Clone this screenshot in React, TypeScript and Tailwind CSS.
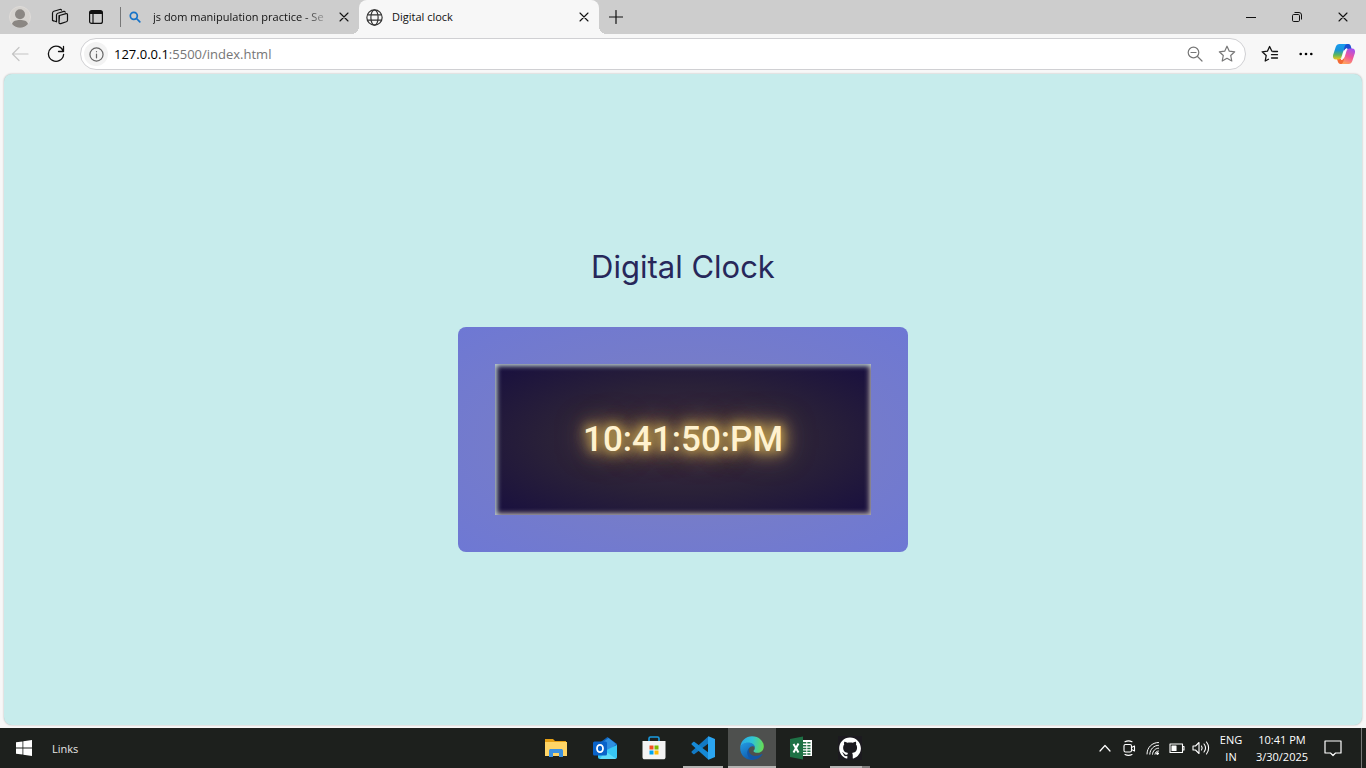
import { useState } from 'react';
import type { ReactNode } from 'react';

function Icon({ children, className = '', box = 20, sw = 1.2 }: { children: ReactNode; className?: string; box?: number; sw?: number }) {
  return (
    <svg viewBox={`0 0 ${box} ${box}`} className={`shrink-0 ${className}`} fill="none" stroke="currentColor" strokeWidth={sw} strokeLinecap="round" strokeLinejoin="round" aria-hidden="true">
      {children}
    </svg>
  );
}

const CloseIcon = () => (
  <Icon box={10} sw={1.1} className="size-[10px]"><path d="M1 1l8 8M9 1l-8 8" /></Icon>
);

function TabBar() {
  return (
    <header className="flex h-[34px] shrink-0 bg-[#cdcdcd] text-[#111]">
      <button aria-label="Profile" className="flex w-10 items-center justify-center">
        <svg viewBox="0 0 22 22" className="size-[22px]" aria-hidden="true">
          <circle cx="11" cy="11" r="10.5" fill="#d6d3cf" stroke="#dedbd8" />
          <circle cx="11" cy="8.2" r="5" fill="#8b8783" />
          <path d="M3 18c1-3.200 4-4 8-4s7 .8 8 4a10.500 10.500 0 0 1-16 0z" fill="#8b8783" />
        </svg>
      </button>
      <button aria-label="Workspaces" className="flex w-10 items-center justify-center">
        <Icon className="size-5" sw={1.2}>
          <path d="M9.500 8.500l6.500-1.800c.8-.2 1.500.2 1.500 1v5.500c0 .8-.4 1.300-1.200 1.600l-5.500 1.800c-1 .3-1.800 0-1.800-1zM6.500 14.800V8c0-1 .5-1.500 1.300-1.800l6-1.800c.6-.1 1.200.2 1.400.7M3.500 14l-1-.5V6.200c0-1 .4-1.600 1.300-1.900l6-1.800c.8-.2 1.400 0 1.700.6M6.500 14.800l-3-1M9 8.500v7.500" />
        </Icon>
      </button>
      <button aria-label="Tab actions" className="flex w-8 items-center justify-center">
        <svg viewBox="0 0 14 14" className="size-[14px]" aria-hidden="true">
          <rect x=".6" y=".6" width="12.800" height="12.800" rx="2" fill="none" stroke="#111" strokeWidth="1.200" />
          <path d="M1 1h12v3H1z" fill="#111" />
          <path d="M4 4v9" stroke="#111" strokeWidth="1.200" />
        </svg>
      </button>
      <nav className="flex" aria-label="Tabs">
        <div className="flex w-[247px] items-center pr-[6px] pl-2">
          <span className="h-5 w-px bg-[#777]" />
          <svg viewBox="0 0 12 12" className="ml-2 size-3 shrink-0" fill="none" stroke="#1673c8" strokeWidth="1.700" strokeLinecap="round" aria-hidden="true">
            <circle cx="4.800" cy="4.800" r="3.500" /><path d="M7.500 7.500l3.300 3.300" />
          </svg>
          <a href="#search" className="ml-3 text-[11px] leading-4 whitespace-nowrap [mask-image:linear-gradient(to_right,black_88%,#0004)]">
            js dom manipulation practice - Se
          </a>
          <button aria-label="Close search tab" className="ml-auto py-1 pr-1"><CloseIcon /></button>
        </div>
        <div className="relative flex w-60 items-center rounded-t-lg bg-[#f7f7f7] pr-[6px] pl-[7px] before:absolute before:bottom-0 before:-left-2 before:size-2 before:bg-[radial-gradient(circle_at_0_0,transparent_8px,#f7f7f7_8px)] after:absolute after:-right-2 after:bottom-0 after:size-2 after:bg-[radial-gradient(circle_at_100%_0,transparent_8px,#f7f7f7_8px)]">
          <Icon className="size-[17px] text-[#333]" box={16} sw={1.1}>
            <circle cx="8" cy="8" r="7.200" /><ellipse cx="8" cy="8" rx="3.400" ry="7.200" /><path d="M1.500 5.500h13M1.500 10.500h13" />
          </Icon>
          <a href="#clock" className="ml-[9px] grow text-[11px] leading-4">Digital clock</a>
          <button aria-label="Close clock tab" className="p-1"><CloseIcon /></button>
        </div>
      </nav>
      <div className="flex grow">
        <button aria-label="New tab" className="flex w-[34px] items-center justify-center">
          <Icon box={14} sw={1.2} className="size-[14px]"><path d="M7 .5v13M.5 7h13" /></Icon>
        </button>
      </div>
      <div className="flex">
        <button aria-label="Minimize" className="flex w-[46px] items-center justify-center">
          <svg viewBox="0 0 10 10" className="size-[10px]" stroke="#111" aria-hidden="true"><path d="M0 5.500h10" /></svg>
        </button>
        <button aria-label="Restore" className="flex w-[46px] items-center justify-center">
          <svg viewBox="0 0 10 10" className="size-[10px]" fill="none" stroke="#111" aria-hidden="true">
            <rect x=".5" y="2.500" width="7" height="7" rx="1.200" /><path d="M2.500.5h4.500a2.500 2.500 0 0 1 2.500 2.500v4.500" />
          </svg>
        </button>
        <button aria-label="Close window" className="flex w-[46px] items-center justify-center"><CloseIcon /></button>
      </div>
    </header>
  );
}

const STAR = 'M10 2.200l2.300 5 5.400.6-4 3.700 1.100 5.500L10 14.300 5.200 17l1.100-5.500-4-3.700 5.400-.6z';

function CopilotLogo() {
  return (
    <svg viewBox="0 0 24 24" className="size-6" aria-hidden="true">
      <defs>
        <linearGradient id="cpA" x1="0" y1="0" x2="0" y2="1"><stop offset="0" stopColor="#1a9cf0" /><stop offset=".4" stopColor="#1894d8" /><stop offset=".7" stopColor="#5cb65c" /><stop offset="1" stopColor="#f0c51c" /></linearGradient>
        <linearGradient id="cpB" x1="0.700" y1="0" x2="0.300" y2="1"><stop offset="0" stopColor="#a551ee" /><stop offset=".5" stopColor="#f0559a" /><stop offset="1" stopColor="#ffa45c" /></linearGradient>
      </defs>
      <path d="M12 2h4.500c1.500 0 2 1 2.400 2.500L19.600 7H15c-1.700 0-2.500 1-3 2.500L10 4z" fill="#1c50d2" />
      <path d="M12 22H8.500C7 22 6.300 21 5.800 19.500L5 17h4c1.700 0 2.500-1 3-2.500L14 20z" fill="#f26a35" />
      <path d="M7.500 2H15c-1.400.3-2 1.500-2.400 2.800L9.500 15c-.5 1.500-1.200 2.500-3 2.500H4C1.500 17.500.5 15.700 1.100 13L3.700 5C4.400 3 5.500 2 7.500 2z" fill="url(#cpA)" />
      <path d="M16.500 22H9c1.400-.3 2-1.500 2.400-2.800L14.500 9c.5-1.500 1.200-2.500 3-2.500H20c2.500 0 3.500 1.800 2.900 4.500L20.300 19c-.7 2-1.800 3-3.800 3z" fill="url(#cpB)" />
      <path d="M13.200 7.600c.5-.5 1-.8 1.800-.9-1 .6-1.300 1.500-1.600 2.500l-2.300 7.600c-.5.500-1 .7-1.900.7 1-.6 1.400-1.500 1.700-2.500z" fill="#fff" stroke="#fff" strokeWidth="1" />
    </svg>
  );
}

function Toolbar() {
  const [url, setUrl] = useState('127.0.0.1:5500/index.html');
  const [host, ...rest] = url.split(':');
  return (
    <div className="flex h-10 shrink-0 items-center bg-[#f7f7f7] pr-[10px] text-[#111]">
      <button aria-label="Back" className="flex w-10 justify-center text-[#c4c4c4]">
        <Icon className="size-[18px]" box={18} sw={1.2}><path d="M1.500 9h15.500M8 2.500L1.500 9 8 15.500" /></Icon>
      </button>
      <button aria-label="Reload" className="flex w-8 justify-center">
        <Icon className="size-[18px]" box={18} sw={1.3}><path d="M16.300 6.500A7.600 7.600 0 1 0 16.600 9.500M16.500 1.500v5h-5" /></Icon>
      </button>
      <div className="ml-2 flex h-8 grow items-center rounded-full border border-[#d0d0d3] bg-white pr-2 pl-[3px]">
        <button aria-label="Site information" className="flex size-6 items-center justify-center rounded-full bg-[#f3f3f3] text-[#666]">
          <Icon className="size-[15px]" box={16} sw={1.3}><circle cx="8" cy="8" r="7" /><path d="M8 7.500v4M8 4.800v.2" /></Icon>
        </button>
        <label className="relative ml-[6px] grow text-[13px] leading-5">
          <span aria-hidden="true" className="text-black">{host}<span className="text-[#767676]">{rest.length ? ':' + rest.join(':') : ''}</span></span>
          <input aria-label="Address" value={url} onChange={(e) => setUrl(e.target.value)} className="absolute inset-0 w-full bg-transparent text-transparent caret-black outline-none" />
        </label>
        <button aria-label="Zoom out" className="flex w-8 justify-center text-[#777]">
          <Icon className="size-4" box={16} sw={1.2}><circle cx="6.500" cy="6.500" r="5.300" /><path d="M10.500 10.500l4.500 4.500M4 6.500h5" /></Icon>
        </button>
        <button aria-label="Add to favorites" className="ml-[6px] flex w-5 justify-center text-[#777]">
          <Icon className="size-5" sw={1.2}><path d={STAR} /></Icon>
        </button>
      </div>
      <button aria-label="Favorites" className="ml-[6px] flex w-9 justify-center">
        <Icon className="size-5" sw={1.3}><path d="M8.500 15.200L5.200 17l1-5.500-4-3.700 5.200-.6L9.600 2.500l2.300 4.700 3.600.4M11.500 10.700h6M11.500 14h6M12.500 7.500h5" /></Icon>
      </button>
      <button aria-label="Settings and more" className="flex w-9 justify-center">
        <svg viewBox="0 0 14 4" className="h-1 w-[14px]" aria-hidden="true"><circle cx="1.700" cy="2" r="1.300" /><circle cx="7" cy="2" r="1.300" /><circle cx="12.300" cy="2" r="1.300" /></svg>
      </button>
      <button aria-label="Copilot" className="ml-2"><CopilotLogo /></button>
    </div>
  );
}

function ClockPage() {
  return (
    <main className="mx-1 mb-[3px] flex grow flex-col items-center justify-center rounded-lg bg-[#c7ecec] pb-1 shadow-[0_0_2px_#aaa]">
      <h1 className="mb-9 font-[Inter,sans-serif] text-[31px] leading-[48px] text-[#27275a]">Digital Clock</h1>
      <section className="rounded-lg bg-[radial-gradient(#7d80bf,#6e78d4)] p-[37px]">
        <div className="flex h-[151px] w-[376px] items-center justify-center bg-[radial-gradient(#3a2c40,#2a2138_50%,#180f3f)] shadow-[inset_2px_2px_5px_#b9cbd0,inset_-2px_-2px_5px_#a59a9a]">
          <time className="font-[Roboto,'Liberation_Sans',sans-serif] text-[35px] leading-[48px] font-medium text-[#fff2cf] [text-shadow:0_0_8px_#b8984f,0_0_14px_#b8984f,0_0_18px_#b8984f,0_0_24px_#a98b4c,0_0_32px_#8a7050]">10:41:50:PM</time>
        </div>
      </section>
    </main>
  );
}

function ExplorerLogo() {
  return (
    <svg viewBox="0 0 24 20" className="h-5 w-6" aria-hidden="true">
      <path d="M1 1h8l2 2h11v5H1z" fill="#e6a014" /><path d="M1 4h22v14H1z" fill="#ffd566" />
      <path d="M5 19v-6c0-1.500.7-2 2-2h10c1.300 0 2 .5 2 2v6h-4v-4H9v4z" fill="#3c91e0" />
    </svg>
  );
}

function OutlookLogo() {
  return (
    <svg viewBox="0 0 24 24" className="size-6" aria-hidden="true">
      <path d="M5 8L14.500 1 24 8v11H7z" fill="#0e64be" /><path d="M9 7l6.500-5L23 8l-7 8z" fill="#2f8fe0" />
      <path d="M5 18l19-9v12c0 1.300-.8 2-2 2H7c-1.300 0-2-.7-2-2z" fill="#37c7f5" /><path d="M12 15l11 7.700-1 .3H7z" fill="#5fdcfa" />
      <rect y="5.500" width="14" height="14" rx="1.500" fill="#0a63c9" /><ellipse cx="7" cy="12.500" rx="3" ry="3.700" fill="none" stroke="#fff" strokeWidth="1.800" />
    </svg>
  );
}

function StoreLogo() {
  return (
    <svg viewBox="0 0 24 24" className="size-6" aria-hidden="true">
      <path d="M7 6V2.500C7 1.500 7.500 1 8.500 1h7c1 0 1.500.5 1.500 1.500V6" fill="none" stroke="#1a9be0" strokeWidth="1.600" />
      <path d="M.5 5h23v16c0 1.500-.8 2.300-2 2.300h-19c-1.200 0-2-.8-2-2.300z" fill="#f3f3f3" />
      <path d="M7.500 9.500h4v4h-4z" fill="#f25022" /><path d="M12.500 9.500h4v4h-4z" fill="#7fba00" />
      <path d="M7.500 14.500h4v4h-4z" fill="#00a4ef" /><path d="M12.500 14.500h4v4h-4z" fill="#ffb900" />
    </svg>
  );
}

function CodeLogo() {
  return (
    <svg viewBox="0 0 24 24" className="size-6" aria-hidden="true">
      <path d="M17.500.2L.8 15.200c-.5.500-.5 1 0 1.500l1.400 1.200c.4.400.9.400 1.400 0L18 7z" fill="#1279c4" />
      <path d="M17.500 23.800L.8 8.800c-.5-.5-.5-1 0-1.500l1.400-1.200c.4-.4.9-.4 1.400 0L18 17z" fill="#1689d6" />
      <path d="M17.500.2L24 3v18l-6.500 2.800c-.3-.4-.5-.7-.5-1.300v-21c0-.6.200-1 .5-1.300z" fill="#2ba5f1" />
    </svg>
  );
}

function EdgeLogo() {
  return (
    <svg viewBox="0 0 24 24" className="size-6" aria-hidden="true">
      <defs>
        <linearGradient id="edA" x1="0" y1=".4" x2="1" y2=".5"><stop offset="0" stopColor="#2aa9e8" /><stop offset=".5" stopColor="#30c5d4" /><stop offset="1" stopColor="#67dd52" /></linearGradient>
        <linearGradient id="edB" x1="0" y1="0" x2=".5" y2="1"><stop offset="0" stopColor="#249de4" /><stop offset="1" stopColor="#0f5cae" /></linearGradient>
      </defs>
      <path d="M.3 11C1 4.500 6 .2 12 .2c7 0 11.800 5 11.800 10.300 0 4-3 6.300-6.300 6.300-2.500 0-4-1-4-1.900 0-.7 1.300-1 1.300-3C14.800 9.200 12 7 8.500 7 4.500 7 1.500 9 .3 11z" fill="url(#edA)" />
      <path d="M.2 12C.3 8.800 4 6.600 8.200 6.600c4 0 6.600 2.300 6.600 5.100-1-1.600-2.800-1.900-4.300-.9C6 13.700 8 22 14.500 23.500 6.500 25.500 0 19.500.2 12z" fill="url(#edB)" />
      <path d="M9.200 12.300c-1.800 4.500 2.500 8.500 7.800 7.500 2.300-.4 3.800-1.300 4.900-1.800.5-.2.8.2.5.6-2 3-5.300 5.200-9 5.200C7 22.500 5.500 15.500 9.200 12.300z" fill="#1456a5" />
    </svg>
  );
}

function ExcelLogo() {
  return (
    <svg viewBox="0 0 24 24" className="size-6" aria-hidden="true">
      <path d="M12 4h11v16H12z" fill="#fff" />
      <path d="M14 6.800h7.500M14 9.700h7.500M14 12.500h7.500M14 15.300h7.500M14 18h7.500" stroke="#217346" strokeWidth="1.500" /><path d="M17.800 5v14" stroke="#fff" />
      <path d="M1 3l13-2.500v23L1 21z" fill="#1e7145" /><path d="M4.500 8l5 8.500M9.500 7.500l-5 9" stroke="#fff" strokeWidth="2" />
    </svg>
  );
}

function GithubLogo() {
  return (
    <svg viewBox="0 0 24 24" className="size-6 bg-[#1c1a1f] p-px" fill="#fff" aria-hidden="true">
      <path d="M12 .5C5.400.5.200 5.800.200 12.300c0 5.200 3.400 9.700 8.100 11.200.6.100.8-.3.800-.6v-2.100c-3.300.7-4-1.500-4-1.500-.5-1.400-1.300-1.800-1.300-1.800-1.100-.7.100-.7.100-.7 1.200.1 1.800 1.200 1.800 1.200 1.100 1.800 2.800 1.300 3.500 1 .1-.8.400-1.300.8-1.600-2.700-.3-5.500-1.300-5.500-5.900 0-1.300.5-2.400 1.200-3.200-.1-.3-.5-1.500.1-3.200 0 0 1-.3 3.300 1.200 2-.5 4-.5 6 0 2.300-1.500 3.300-1.200 3.300-1.200.6 1.700.2 2.900.1 3.200.8.800 1.200 1.900 1.200 3.200 0 4.600-2.800 5.600-5.500 5.900.4.400.8 1.100.8 2.200v3.300c0 .3.200.7.800.6 4.700-1.600 8.100-6 8.100-11.200C23.800 5.800 18.600.5 12 .5z" />
    </svg>
  );
}

const APPS = [
  { name: 'File Explorer', logo: <ExplorerLogo />, state: '', bar: '' },
  { name: 'Outlook', logo: <OutlookLogo />, state: '', bar: '' },
  { name: 'Microsoft Store', logo: <StoreLogo />, state: '', bar: '' },
  { name: 'Visual Studio Code', logo: <CodeLogo />, state: '', bar: 'inset-x-1 bg-[#b4b4b2]' },
  { name: 'Microsoft Edge', logo: <EdgeLogo />, state: 'bg-[#4e504e]', bar: 'inset-x-0 bg-[#b4b4b2]' },
  { name: 'Excel', logo: <ExcelLogo />, state: '', bar: '' },
  { name: 'GitHub Desktop', logo: <GithubLogo />, state: '', bar: 'inset-x-1 border-r-8 border-[#7d7d7b] bg-[#b4b4b2]' },
];

function Taskbar() {
  return (
    <footer className="grid h-10 shrink-0 grid-cols-[1fr_auto_1fr] bg-[#1d201d] text-[11px] leading-[17px] text-white">
      <div className="flex items-center">
        <button aria-label="Start" className="flex w-12 justify-center">
          <svg viewBox="0 0 16 16" className="size-4" fill="#fff" aria-hidden="true"><path d="M0 2.300l6.500-.9v6.200H0zM7.300 1.300L16 0v7.600H7.300zM0 8.400h6.500v6.200L0 13.700zM7.300 8.400H16V16l-8.700-1.300z" /></svg>
        </button>
        <a href="#links" className="ml-1 text-[#e6e6e6]">Links</a>
      </div>
      <nav className="flex gap-px pl-10" aria-label="Pinned apps">
        {APPS.map((app) => (
          <button key={app.name} aria-label={app.name} className={`relative flex w-12 items-center justify-center ${app.state}`}>
            {app.logo}
            {app.bar && <span className={`absolute bottom-0 h-[2px] ${app.bar}`} />}
          </button>
        ))}
      </nav>
      <div className="flex items-center justify-end">
        <button aria-label="Show hidden icons" className="flex w-6 justify-center"><Icon box={12} className="size-3"><path d="M1 9l5-5.500L11 9" /></Icon></button>
        <button aria-label="Meet now" className="flex w-6 justify-center">
          <Icon box={16} sw={1.1} className="size-4"><rect x="3" y="4.500" width="7.500" height="7.500" rx="1.500" /><path d="M10.500 7.500l3-1.500v5l-3-1.500M4 1.800c2-1 5-1 7 0M4 14.500c2 1 5 1 7 0" /></Icon>
        </button>
        <button aria-label="Network" className="flex w-6 justify-center">
          <Icon box={16} sw={1} className="size-4"><path d="M2 14C2 7.500 7 2.500 13.500 2.500M4.800 14.200C5 9 9 5.300 13.500 5.300M7.500 14.200c.2-3.200 2.700-6 6-6M10 14.200c.2-1.800 1.500-3.200 3.500-3.200" /><circle cx="12.500" cy="13.500" r="1" fill="#fff" /></Icon>
        </button>
        <button aria-label="Battery" className="flex w-6 justify-center">
          <Icon box={16} sw={1.1} className="size-4"><path d="M1 4h12.500v8.500H1zM13.500 6.500H15v3.500h-1.500" /><path d="M3 6h4v4.500H3z" fill="#fff" /></Icon>
        </button>
        <button aria-label="Volume" className="flex w-6 justify-center">
          <Icon box={18} sw={1.1} className="size-[18px]"><path d="M1 7v4h2.500L7 14.500v-11L3.500 7zM9.500 7c.8 1.200.8 2.800 0 4M12 5c1.800 2.300 1.800 5.700 0 8M14.500 3c2.800 3.500 2.800 8.500 0 12" /></Icon>
        </button>
        <button className="w-9 text-center">ENG<br />IN</button>
        <button className="w-[66px] text-center"><time>10:41 PM<br />3/30/2025</time></button>
        <button aria-label="Notifications" className="mr-[10px] flex w-9 justify-center">
          <Icon box={18} sw={1.2} className="size-[18px]"><path d="M1 2h16v12h-5.500L9 16.500 6.500 14H1z" /></Icon>
        </button>
        <button aria-label="Show desktop" className="h-full w-[5px] border-l border-[#777]" />
      </div>
    </footer>
  );
}

export default function App() {
  return (
    <div className="flex min-h-screen flex-col bg-[#f7f7f7] font-['Open_Sans','Noto_Sans',sans-serif]">
      <TabBar />
      <Toolbar />
      <ClockPage />
      <Taskbar />
    </div>
  );
}
